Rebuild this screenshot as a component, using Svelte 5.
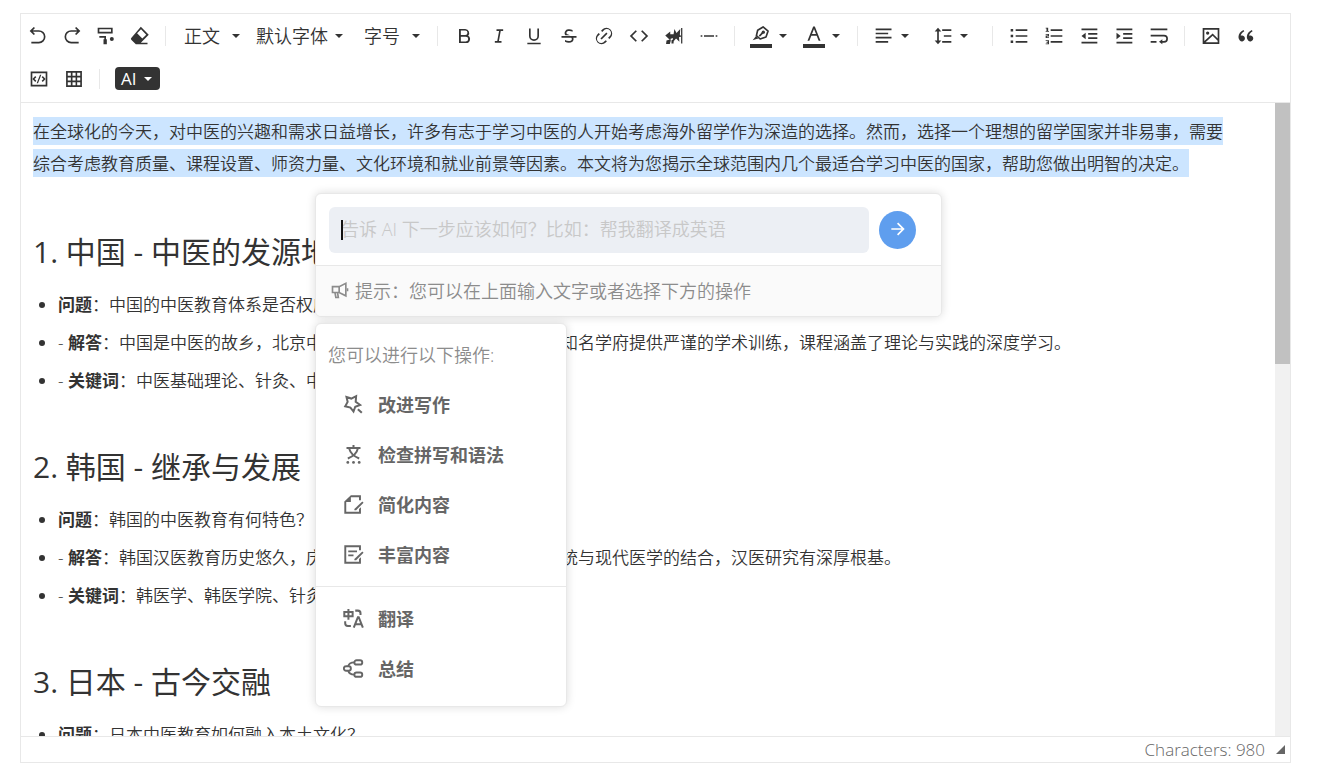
<script>
  const tools = [
    { type: "icon", name: "undo", label: "撤销" },
    { type: "icon", name: "redo", label: "重做" },
    { type: "icon", name: "brush", label: "格式刷" },
    { type: "icon", name: "eraser", label: "清除格式" },
    { type: "divider" },
    { type: "select", name: "heading", label: "正文" },
    { type: "select", name: "family", label: "默认字体" },
    { type: "select", name: "size", label: "字号" },
    { type: "divider" },
    { type: "icon", name: "bold", label: "加粗" },
    { type: "icon", name: "italic", label: "斜体" },
    { type: "icon", name: "underline", label: "下划线" },
    { type: "icon", name: "strike", label: "删除线" },
    { type: "icon", name: "link", label: "链接" },
    { type: "icon", name: "code", label: "行内代码" },
    { type: "icon", name: "break", label: "分页" },
    { type: "icon", name: "hr", label: "分割线" },
    { type: "divider" },
    { type: "split", name: "highlight", label: "背景色", bar: true },
    { type: "split", name: "color", label: "文字颜色", bar: true },
    { type: "divider" },
    { type: "split", name: "align", label: "对齐" },
    { type: "split", name: "lineheight", label: "行高" },
    { type: "divider" },
    { type: "icon", name: "ul", label: "无序列表" },
    { type: "icon", name: "ol", label: "有序列表" },
    { type: "icon", name: "outdent", label: "减少缩进" },
    { type: "icon", name: "indent", label: "增加缩进" },
    { type: "icon", name: "wrap", label: "换行" },
    { type: "divider" },
    { type: "icon", name: "image", label: "图片" },
    { type: "icon", name: "quote", label: "引用" },
    { type: "icon", name: "codeblock", label: "代码块" },
    { type: "icon", name: "table", label: "表格" },
    { type: "divider" },
    { type: "ai" },
  ];

  const icons = {
    undo: '<path d="M5.8 7 8.4 9.5 6.9 10.9 2 6 6.9 1.05 8.4 2.5 5.8 5H13a8 8 0 0 1 0 16H4v-2h9a6 6 0 0 0 0-12H5.8z"/>',
    redo: '<path d="M18.2 7H11a6 6 0 0 0 0 12h9v2h-9a8 8 0 0 1 0-16h7.2l-2.6-2.5 1.5-1.45L22 6l-4.9 4.9-1.5-1.4L18.2 7z"/>',
    brush:
      '<path fill-rule="evenodd" d="M2 2h18v7H2V2zm2 2v3h14V4H4z"/><path d="M4 12h8v4h1v6H9v-6h1v-2H4z"/><circle cx="19" cy="15.5" r="2.4"/>',
    eraser:
      '<path fill-rule="evenodd" d="m13 1 9.5 9.5L13 20h8v2H7l-5.500-5.500a1.500 1.500 0 0 1 0-2L13 1zm.2 3L8.500 8.700l6.300 6.300 4.700-4.500L13.200 4z"/>',
    bold: '<path fill-rule="evenodd" d="M6 3.500h7.500a5 5 0 0 1 3.500 8.300 4.700 4.700 0 0 1-2.500 8.700H6v-17zm2.200 2v5.300h5.300a2.650 2.650 0 0 0 0-5.300H8.200zm0 7.300v5.700h6a2.850 2.850 0 0 0 0-5.700h-6z"/>',
    italic: '<path d="M15 20H7v-2h2.900l2.200-12H9V4h8v2h-2.900l-2.200 12H15z"/>',
    underline: '<path d="M8 3v9a4 4 0 0 0 8 0V3h2v9a6 6 0 0 1-12 0V3h2zM4 20h16v2H4v-2z"/>',
    strike:
      '<path d="M17.2 14c.2.5.3 1.100.3 1.600 0 1.400-.5 2.500-1.500 3.200-1 .8-2.400 1.200-4.200 1.200-1.600 0-3.100-.4-4.600-1.100v-2.200c1.400.9 3 1.300 4.500 1.300 2.500 0 3.700-.8 3.700-2.200 0-.6-.3-1.200-.7-1.600L14.500 14H3v-2h18v2h-3.800zm-4-3H7.600a3.700 3.700 0 0 1-.9-2.600c0-1.200.5-2.300 1.400-3.100C9 4.400 10.400 4 12.300 4c1.400 0 2.800.3 4 .9v2.100a8 8 0 0 0-3.800-.9c-2.400 0-3.600.8-3.600 2.300 0 .4.2.8.6 1.100.4.3.9.5 1.500.7l2.200.9z"/>',
    link: '<path d="m18.400 15.500-1.500-1.400 1.500-1.500a5 5 0 1 0-7-7L9.900 7.100 8.500 5.600l1.400-1.400a7 7 0 0 1 9.900 9.900l-1.400 1.400zm-2.900 2.900-1.400 1.400a7 7 0 0 1-9.900-9.900l1.400-1.400 1.500 1.400-1.500 1.500a5 5 0 1 0 7 7l1.500-1.400 1.400 1.400zm-.7-10.600 1.400 1.400-7 7.100-1.500-1.400 7.100-7.100z"/>',
    code: '<path d="m23 12-7 7-1.500-1.400 5.700-5.600-5.700-5.700L16 5l7 7zM3.800 12l5.700 5.600L8 19l-7-7 7-7 1.500 1.300L3.800 12z"/>',
    break:
      '<path d="m1.500 11.500 6-5v3.500h4l1-6.500 2.500 5 4.500-5-.5 7 2 2-3 1 .5 5.500-4-4-3.500 4-.5-4.500-3 1v1.500L1.500 11.500z"/><path d="M3 17.500 8 16v2l-1 3.500H2.500z"/><path d="M20.500 2.500H22V21h-1.500zM9 17l2.500-1v5L9 21z"/>',
    hr: '<path d="M6 11h12v2H6zM2 11h2v2H2zM20 11h2v2h-2z"/>',
    highlight:
      '<g fill="none" stroke="currentColor" stroke-width="2" stroke-linejoin="round"><path d="m14.500 3.500 6 5-2.500 7-7 2.500-4.500-4 1.500-6.500z"/><path d="m10 14.500 4.500-4.500"/></g><circle cx="14.800" cy="9.800" r="2"/><path d="m6 14.500 3 3-2.500.5L2 19.500z"/>',
    color: '<path d="M15.200 14H8.800l-2.400 6H4.200L11 3h2l6.800 17h-2.200l-2.400-6zm-.8-2L12 5.900 9.600 12h4.800z"/>',
    align: '<path d="M2 3h19v2H2V3zm0 5h15v2H2V8zm0 5h19v2H2v-2zm0 5h15v2H2v-2z"/>',
    lineheight:
      '<path d="M11 4h11v2H11V4zm2 7h9v2h-9v-2zm-2 7h11v2H11v-2zM6 2l4 4.500H7v11h3L6 22l-4-4.500h3v-11H2L6 2z"/>',
    ul: '<path d="M8 4h14v2H8V4zM2 3.500h3v3H2v-3zm0 7h3v3H2v-3zm0 7h3v3H2v-3zM8 11h14v2H8v-2zm0 7h14v2H8v-2z"/>',
    ol: '<path d="M8 4h14v2H8V4zM3 2h2v4h1v1H2V6h1V3H2V2h1zM2 9.500h4v3H3.500v1H6v1H2v-3h2.500v-1H2v-1zM2 17h4v5H2v-1h2.500v-1H3v-1h1.500v-1H2v-1zM8 11h14v2H8v-2zm0 7h14v2H8v-2z"/>',
    outdent: '<path d="M3 3h19v2H3V3zm0 16h19v2H3v-2zm8-5.500h11v2H11v-2zm0-5h11v2H11v-2zM3 12l5-4v8z"/>',
    indent: '<path d="M3 3h19v2H3V3zm0 16h19v2H3v-2zm8-5.500h11v2H11v-2zm0-5h11v2H11v-2zM8 12 3 8v8z"/>',
    wrap: '<path d="M2 3h20v2H2V3zm14 15h2a2.500 2.500 0 0 0 0-5.500H2v-2h16a4.500 4.500 0 0 1 0 9.500h-2v2l-4-3 4-3v2zM2 18h7v2H2v-2z"/>',
    image:
      '<path fill-rule="evenodd" d="M2 2.500h20v19H2v-19zm2 2V18l10-9 6 6V4.500H4zm16 13.300-6-6-8.500 7.700H20v-1.700zM8 6.500a2 2 0 1 1 0 4 2 2 0 0 1 0-4z"/>',
    quote:
      '<path d="M4.600 17.300C3.600 16.200 3 15 3 13c0-3.500 2.500-6.600 6-8.200l.9 1.400c-3.300 1.800-4 4.100-4.200 5.600.5-.3 1.200-.4 1.900-.3a3.500 3.500 0 1 1-3 5.800zm10 0C13.600 16.200 13 15 13 13c0-3.500 2.500-6.600 6-8.200l.9 1.400c-3.300 1.800-4 4.100-4.200 5.600.5-.3 1.200-.4 1.900-.3a3.500 3.500 0 1 1-3 5.800z"/>',
    codeblock:
      '<path fill-rule="evenodd" d="M2 3h20v18H2V3zm2 2v14h16V5H4z"/><path d="m20 12-3.500 3.500-1.300-1.300 2.200-2.200-2.200-2.200 1.300-1.300L20 12zM6.600 12l2.200 2.200-1.300 1.300L4 12l3.500-3.500 1.300 1.300L6.600 12zm4.200 5H9.200l4-10h1.600l-4 10z"/>',
    table:
      '<path fill-rule="evenodd" d="M2.500 2.500h19v19h-19v-19zm2 2v3.700h3.700V4.500H4.500zm5.700 0v3.700h3.700V4.500h-3.700zm5.600 0v3.700h3.700V4.500h-3.700zM4.500 10.200v3.700h3.700v-3.700H4.500zm5.700 0v3.700h3.700v-3.700h-3.700zm5.600 0v3.700h3.700v-3.700h-3.700zM4.500 15.800v3.700h3.700v-3.700H4.500zm5.700 0v3.700h3.700v-3.700h-3.700zm5.600 0v3.700h3.700v-3.700h-3.700z"/>',
    megaphone:
      '<g fill="none" stroke="currentColor" stroke-width="2"><path d="M3 8h8l8-4v15l-8-4H3z"/><path d="M11 8v7M6 15l1 6h3l-1-6M21 10v3.500"/></g>',
    improve:
      '<g fill="none" stroke="currentColor" stroke-width="2.300"><path d="M4 3.500l5.500 1.700L15 2.500l-.5 6.500 5 3.500-5.500 2-2 5.500-3.500-4.500L2.500 14l2.800-5z"/><path d="m17 17.500 4.500 4"/></g>',
    spell:
      '<g fill="none" stroke="currentColor" stroke-width="2.300"><path d="M4 4.500h16M12 1v3.500M17 5c-1 5-5 9-11.500 11.500M7 5c1 4 5 9 11.500 11.500"/></g><circle cx="5.500" cy="21" r="1.600"/><circle cx="12" cy="21" r="1.600"/><circle cx="18.500" cy="21" r="1.600"/>',
    simplify:
      '<path d="M9 1.500h11.500V7h-2.200V3.700H9V9H3.700v11.300h14.600V17l2.200-2v7.500h-19V8.500z"/><path d="m22 8.500 1.500 1.500-8.500 8.500h-2V17z"/>',
    enrich:
      '<path d="M1.500 1.500h19V7h-2.200V3.700H3.700v16.600h14.600V17l2.200-2v7.500h-19zM6 7.500h10v2H6zM6 12h6v2H6z"/><path d="m22 8.500 1.500 1.500-8.500 8.500h-2V17z"/>',
    translate:
      '<g fill="none" stroke="currentColor" stroke-width="2.300"><path d="M1.500 4.500h9.500v5H1.500zM6.200 1v12.500M14 3h3a3 3 0 0 1 3 3v2M2.500 15v2.500a3 3 0 0 0 3 3H9M12.300 22.500 17 10.500h1l4.700 12M14 18.500h7"/></g>',
    summary:
      '<g fill="none" stroke="currentColor" stroke-width="2.200"><rect x="1" y="9.500" width="8" height="5" rx="2.500"/><rect x="13" y="2.500" width="9" height="5" rx="2.500"/><rect x="13" y="16.500" width="9" height="5" rx="2.500"/><path d="M6 9.500c.5-3 3-4.500 7-4.500M6 14.500c.5 3 3 4.500 7 4.500"/></g>',
    arrow: '<path d="m16.200 11-5.400-5.400 1.400-1.400L20 12l-7.800 7.800-1.400-1.400 5.400-5.400H4v-2h12.200z"/>',
  };

  const sections = [
    {
      title: "1. 中国 - 中医的发源地",
      items: [
        { lead: "", name: "问题", text: "中国的中医教育体系是否权威？" },
        {
          lead: "- ",
          name: "解答",
          text: "中国是中医的故乡，北京中医药大学、上海中医药大学等各知名学府提供严谨的学术训练，课程涵盖了理论与实践的深度学习。",
        },
        { lead: "- ", name: "关键词", text: "中医基础理论、针灸、中药学" },
      ],
    },
    {
      title: "2. 韩国 - 继承与发展",
      items: [
        { lead: "", name: "问题", text: "韩国的中医教育有何特色？" },
        {
          lead: "- ",
          name: "解答",
          text: "韩国汉医教育历史悠久，庆熙大学等韩国的知名院校注重传统与现代医学的结合，汉医研究有深厚根基。",
        },
        { lead: "- ", name: "关键词", text: "韩医学、韩医学院、针灸" },
      ],
    },
    {
      title: "3. 日本 - 古今交融",
      items: [{ lead: "", name: "问题", text: "日本中医教育如何融入本土文化？" }],
    },
  ];

  const editActions = [
    { icon: "improve", label: "改进写作" },
    { icon: "spell", label: "检查拼写和语法" },
    { icon: "simplify", label: "简化内容" },
    { icon: "enrich", label: "丰富内容" },
  ];

  const moreActions = [
    { icon: "translate", label: "翻译" },
    { icon: "summary", label: "总结" },
  ];

  let prompt = $state("");
</script>

{#snippet icon(name)}
  <svg class="icon" viewBox="0 0 24 24" fill="currentColor" aria-hidden="true">{@html icons[name]}</svg>
{/snippet}

{#snippet caret()}
  <svg class="caret" viewBox="0 0 8 4" fill="currentColor" aria-hidden="true"><path d="M0 0h8L4 4z" /></svg>
{/snippet}

{#snippet action(item)}
  <li>
    <button type="button" class="action">
      {@render icon(item.icon)}
      {item.label}
    </button>
  </li>
{/snippet}

<div class="editor">
  <div class="toolbar" role="toolbar">
    {#each tools as tool}
      {#if tool.type === "divider"}
        <span class="divider"></span>
      {:else if tool.type === "select"}
        <label class="picker {tool.name}">
          <select aria-label={tool.label}>
            <option>{tool.label}</option>
          </select>
          {@render caret()}
        </label>
      {:else if tool.type === "ai"}
        <button type="button" class="ai">AI {@render caret()}</button>
      {:else}
        <button
          type="button"
          class="tool"
          class:split={tool.type === "split"}
          class:bar={tool.bar}
          aria-label={tool.label}
        >
          <span class="glyph">{@render icon(tool.name)}</span>
          {#if tool.type === "split"}
            {@render caret()}
          {/if}
        </button>
      {/if}
    {/each}
  </div>

  <div class="body">
    <div class="content">
      <p>
        <mark>在全球化的今天，对中医的兴趣和需求日益增长，许多有志于学习中医的人开始考虑海外留学作为深造的选择。然而，选择一个理想的留学国家并非易事，需要综合考虑教育质量、课程设置、师资力量、文化环境和就业前景等因素。本文将为您揭示全球范围内几个最适合学习中医的国家，帮助您做出明智的决定。</mark>
      </p>

      {#each sections as section}
        <section>
          <h2>{section.title}</h2>
          <ul>
            {#each section.items as item}
              <li>{item.lead}<strong>{item.name}</strong>：{item.text}</li>
            {/each}
          </ul>
        </section>
      {/each}
    </div>

    <div class="scrollbar"><div class="thumb"></div></div>

    <!-- AI popup -->
    <div class="popup">
      <form class="panel" onsubmit={(e) => e.preventDefault()}>
        <div class="ask">
          <div class="field">
            <input
              type="text"
              aria-label="AI"
              bind:value={prompt}
              placeholder="告诉 AI 下一步应该如何？比如：帮我翻译成英语"
            />
            <span class="cursor"></span>
          </div>
          <button type="submit" class="send" aria-label="发送">{@render icon("arrow")}</button>
        </div>
        <div class="tip">
          {@render icon("megaphone")}
          提示：您可以在上面输入文字或者选择下方的操作
        </div>
      </form>

      <div class="menu">
        <div class="menu-title">您可以进行以下操作:</div>
        <ul>
          {#each editActions as item}
            {@render action(item)}
          {/each}
        </ul>
        <ul class="more">
          {#each moreActions as item}
            {@render action(item)}
          {/each}
        </ul>
      </div>
    </div>
  </div>

  <div class="status">
    <span>Characters: 980</span>
    <svg class="resize" viewBox="0 0 9 9" aria-hidden="true"><path d="M9 0v9H0z" /></svg>
  </div>
</div>

<style>
  :global(body) {
    background: #fff;
  }

  .editor {
    box-sizing: border-box;
    display: flex;
    flex-direction: column;
    height: calc(100vh - 34px);
    margin: 13px 29px 21px 20px;
    border: 1px solid #e8e8e8;
    color: #333;
    font-family: "Open Sans", "Noto Sans CJK SC", sans-serif;
    font-size: 17px;
  }

  button,
  select,
  input {
    margin: 0;
    padding: 0;
    border: none;
    background: none;
    color: inherit;
    font: inherit;
  }

  ul {
    margin: 0;
    padding: 0;
    list-style: none;
  }

  .icon {
    display: block;
    flex: none;
    width: 20px;
    height: 20px;
  }

  .caret {
    flex: none;
    width: 8px;
    height: 4px;
  }

  /* Toolbar */
  .toolbar {
    display: flex;
    flex-wrap: wrap;
    align-items: center;
    padding-bottom: 2px;
    border-bottom: 1px solid #e8e8e8;
  }

  .tool {
    display: flex;
    align-items: center;
    width: 35px;
    height: 43px;
  }

  .tool:nth-child(-n + 4) {
    width: 34px;
  }

  .glyph {
    display: flex;
    justify-content: center;
    width: 35px;
  }

  .split {
    width: 59px;
  }

  .bar {
    width: 53px;
  }

  .bar .glyph {
    box-sizing: border-box;
    width: 22px;
    margin: 0 7px;
    border-bottom: 4px solid #333;
  }

  .divider {
    width: 1px;
    height: 20px;
    margin: 0 8px;
    background: #e8e8e8;
  }

  .picker {
    display: flex;
    align-items: center;
    box-sizing: border-box;
    width: 72px;
    height: 43px;
    padding-left: 10px;
    font-size: 18px;
    font-weight: 350;
  }

  .picker select {
    appearance: none;
    width: 48px;
  }

  .picker.family {
    width: 108px;
  }

  .picker.family select {
    width: 79px;
  }

  .picker.size {
    width: 75px;
  }

  .ai {
    display: flex;
    align-items: center;
    gap: 7px;
    height: 23px;
    margin-left: 7px;
    padding: 0 8px 0 6px;
    border-radius: 4px;
    background: #333;
    color: #fff;
  }

  /* Document */
  .body {
    position: relative;
    display: flex;
    flex: 1;
    min-height: 0;
  }

  .content {
    flex: 1;
    overflow: hidden;
    padding: 13px 45px 0 12px;
    font-weight: 350;
  }

  p {
    margin: 0 0 49px;
    line-height: 32px;
  }

  mark {
    padding: 3px 0 2px;
    background: #cce5ff;
    color: inherit;
  }

  section {
    margin-bottom: 49px;
  }

  h2 {
    margin: 0 0 16px;
    font-size: 30px;
    font-weight: 400;
    line-height: 46px;
  }

  .content ul {
    display: grid;
    gap: 10px;
    padding-left: 25px;
    list-style: disc;
    line-height: 28px;
  }

  strong {
    font-weight: 700;
  }

  .scrollbar {
    width: 15px;
    background: #f1f1f1;
  }

  .thumb {
    height: 261px;
    background: #c1c1c1;
  }

  /* AI popup */
  .popup {
    position: absolute;
    top: 90px;
    left: 294px;
    display: grid;
    gap: 6px;
    font-size: 18px;
    font-weight: 350;
  }

  .panel,
  .menu {
    box-sizing: border-box;
    overflow: hidden;
    border: 1px solid #e8e8e8;
    border-radius: 6px;
    background: #fff;
    box-shadow: 0 0 10px rgba(0, 0, 0, 0.14);
  }

  .panel {
    width: 627px;
  }

  .ask {
    display: flex;
    align-items: center;
    gap: 10px;
    padding: 13px 25px 12px 13px;
  }

  .field {
    position: relative;
    flex: 1;
  }

  .field input {
    box-sizing: border-box;
    display: block;
    width: 100%;
    height: 46px;
    padding: 0 12px 2px;
    border-radius: 6px;
    background: #eceff4;
    outline: none;
  }

  .field input::placeholder {
    color: #c8c8c8;
    opacity: 1;
  }

  .cursor {
    position: absolute;
    top: 13px;
    left: 12px;
    width: 2px;
    height: 20px;
    background: #111;
  }

  .send {
    display: grid;
    place-items: center;
    width: 37px;
    height: 38px;
    padding-bottom: 2px;
    border-radius: 50%;
    background: #5f9eee;
    color: #fff;
  }

  .tip {
    box-sizing: border-box;
    display: flex;
    align-items: center;
    gap: 5px;
    height: 51px;
    padding: 0 14px 2px;
    border-top: 1px solid #e8e8e8;
    background: #fafafa;
    color: #8c8c8c;
  }

  .menu {
    width: 252px;
    padding-bottom: 12px;
  }

  .menu-title {
    padding: 19px 12px 13px;
    color: #8c8c8c;
    line-height: 24px;
  }

  .action {
    display: flex;
    align-items: center;
    gap: 14px;
    width: 100%;
    height: 50px;
    padding: 0 27px 2px;
    color: #666;
    font-weight: 700;
    text-align: left;
  }

  .action .icon {
    width: 21px;
    height: 21px;
  }

  .more {
    margin-top: 6px;
    padding-top: 7px;
    border-top: 1px solid #e8e8e8;
  }

  /* Status bar */
  .status {
    display: flex;
    justify-content: flex-end;
    align-items: center;
    gap: 11px;
    height: 25px;
    padding-right: 5px;
    border-top: 1px solid #e8e8e8;
    color: #666;
    font-weight: 350;
  }

  .resize {
    width: 9px;
    height: 9px;
    fill: #666;
  }
</style>
